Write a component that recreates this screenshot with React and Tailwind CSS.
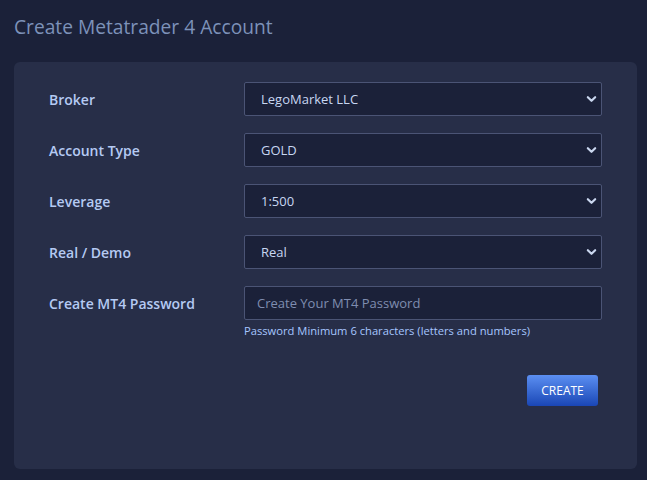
import React from "react";

function Chevron() {
  return (
    <svg width="11" height="11" viewBox="0 0 12 12" className="pointer-events-none absolute right-[5px] top-1/2 -translate-y-1/2">
      <path d="M2 4 L6 8 L10 4" fill="none" stroke="#c9d6ee" strokeWidth="2.4" strokeLinecap="round" strokeLinejoin="round" />
    </svg>
  );
}

function SelectRow({ label, value, options }) {
  return (
    <div className="flex items-center">
      <label className="w-[195px] shrink-0 text-[14px] font-semibold text-[#b5caf3]">{label}</label>
      <div className="relative w-[359px]">
        <select
          defaultValue={value}
          className="h-[34px] w-full appearance-none rounded-[2px] border border-[#4b5475] bg-[#1b2139] pl-[16px] pr-8 pt-[2px] text-[13px] text-[#c8d7f2] outline-none"
        >
          {options.map((o) => (
            <option key={o} value={o}>{o}</option>
          ))}
        </select>
        <Chevron />
      </div>
    </div>
  );
}

export default function App() {
  return (
    <div className="min-h-[480px] bg-[#1b2139] pl-[14px] pr-[10px] pt-[13px] pb-[11px] font-['Open_Sans',sans-serif]">
      <h1 className="text-[19.2px] font-normal leading-[28px] text-[#7d92b9]">Create Metatrader 4 Account</h1>
      <div className="mt-[21px] h-[407px] rounded-[6px] bg-[#272e48] pl-[35px] pr-[35px] pt-[20px]">
        <div className="flex flex-col gap-[17px]">
          <SelectRow label="Broker" value="LegoMarket LLC" options={["LegoMarket LLC"]} />
          <SelectRow label="Account Type" value="GOLD" options={["GOLD", "SILVER", "STANDARD"]} />
          <SelectRow label="Leverage" value="1:500" options={["1:500", "1:200", "1:100"]} />
          <SelectRow label="Real / Demo" value="Real" options={["Real", "Demo"]} />
          <div className="flex items-start">
            <label className="flex h-[34px] w-[195px] shrink-0 items-center text-[14px] font-semibold text-[#b5caf3]">Create MT4 Password</label>
            <div className="w-[359px]">
              <input
                type="password"
                placeholder="Create Your MT4 Password"
                className="h-[34px] w-full rounded-[2px] border border-[#4b5475] bg-[#1b2139] px-[12px] text-[13px] text-[#c8d7f2] outline-none placeholder:text-[#7f8db0]"
              />
              <p className="mt-[3px] text-[11.2px] leading-[15px] text-[#a6c6ff]">Password Minimum 6 characters (letters and numbers)</p>
            </div>
          </div>
        </div>
        <div className="mt-[37px] flex justify-end pr-[4px]">
          <button className="h-[31px] w-[71px] rounded-[3px] bg-gradient-to-b from-[#5c8ff2] to-[#1a46b5] text-[12px] text-white">CREATE</button>
        </div>
      </div>
    </div>
  );
}
